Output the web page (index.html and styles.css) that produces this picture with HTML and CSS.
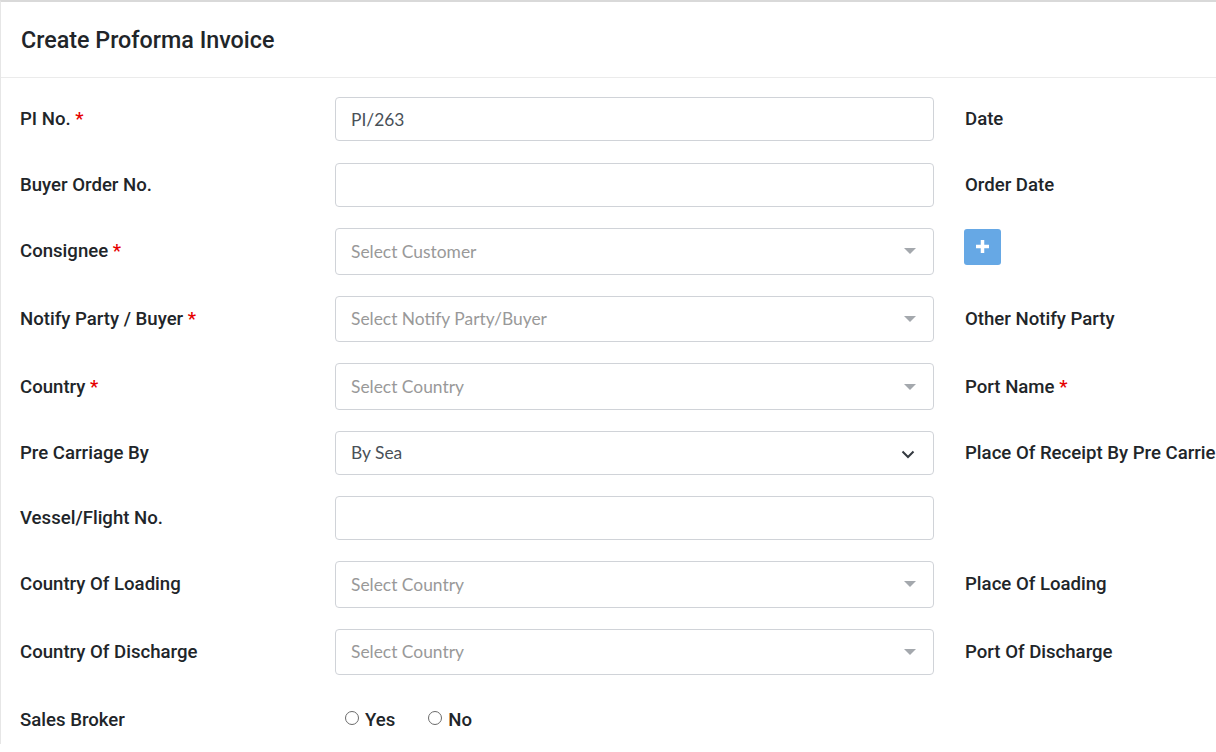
FILE: index.html
```html
<!DOCTYPE html>
<html>
<head>
<meta charset="utf-8">
<link rel="stylesheet" href="styles.css">
</head>
<body>
<div class="card">
  <div class="card-header"><h1 class="title">Create Proforma Invoice</h1></div>
  <div class="card-body">
    <div class="row first">
      <label class="lbl">PI No. <span class="req">*</span></label>
      <div class="control"><div class="input"><span class="val">PI/263</span></div></div>
      <label class="lbl lbl-right">Date</label>
    </div>
    <div class="row">
      <label class="lbl">Buyer Order No.</label>
      <div class="control"><div class="input"></div></div>
      <label class="lbl lbl-right">Order Date</label>
    </div>
    <div class="row">
      <label class="lbl">Consignee <span class="req">*</span></label>
      <div class="control"><div class="select2"><span class="ph">Select Customer</span><span class="tri"></span></div></div>
      <div class="right"><button class="btn-plus"><svg width="15" height="15" viewBox="0 0 15 15"><path d="M7.5 1v13M1 7.5h13" stroke="#fff" stroke-width="3.5" fill="none"/></svg></button></div>
    </div>
    <div class="row">
      <label class="lbl">Notify Party / Buyer <span class="req">*</span></label>
      <div class="control"><div class="select2"><span class="ph">Select Notify Party/Buyer</span><span class="tri"></span></div></div>
      <label class="lbl lbl-right">Other Notify Party</label>
    </div>
    <div class="row">
      <label class="lbl">Country <span class="req">*</span></label>
      <div class="control"><div class="select2"><span class="ph">Select Country</span><span class="tri"></span></div></div>
      <label class="lbl lbl-right">Port Name <span class="req">*</span></label>
    </div>
    <div class="row">
      <label class="lbl">Pre Carriage By</label>
      <div class="control"><div class="input native"><span class="val">By Sea</span><svg class="chev" width="14" height="10" viewBox="0 0 14 10"><path d="M1.5 2.5l5.5 5.5 5.5-5.5" stroke="#343a40" stroke-width="2" fill="none"/></svg></div></div>
      <label class="lbl lbl-right">Place Of Receipt By Pre Carrier</label>
    </div>
    <div class="row">
      <label class="lbl">Vessel/Flight No.</label>
      <div class="control"><div class="input"></div></div>
      <div class="right"></div>
    </div>
    <div class="row">
      <label class="lbl">Country Of Loading</label>
      <div class="control"><div class="select2"><span class="ph">Select Country</span><span class="tri"></span></div></div>
      <label class="lbl lbl-right">Place Of Loading</label>
    </div>
    <div class="row">
      <label class="lbl">Country Of Discharge</label>
      <div class="control"><div class="select2"><span class="ph">Select Country</span><span class="tri"></span></div></div>
      <label class="lbl lbl-right">Port Of Discharge</label>
    </div>
    <div class="row radio-row">
      <label class="lbl">Sales Broker</label>
      <div class="control radios">
        <label class="radio"><span class="circle"></span>Yes</label>
        <label class="radio"><span class="circle"></span>No</label>
      </div>
      <div class="right"></div>
    </div>
  </div>
</div>
</body>
</html>
```
FILE: styles.css
```css
html, body {
  margin: 0;
  padding: 0;
  background: #fff;
  overflow: hidden;
}
body {
  width: 1216px;
  height: 752px;
  font-family: Roboto, "Liberation Sans", sans-serif;
  color: #212529;
}
.card {
  border-top: 2px solid #d9d9d9;
  border-left: 1px solid #e6e6e6;
  width: 1400px;
  background: #fff;
}
.card-header {
  height: 75px;
  border-bottom: 1px solid #ebebeb;
  display: flex;
  align-items: center;
  padding-left: 20px;
}
.title {
  margin: 0;
  font-size: 23.3px;
  font-weight: 500;
  color: #212529;
}
.card-body {
  padding: 19px 0 0 19px;
}
.row {
  display: grid;
  grid-template-columns: 315px 599px 400px;
  column-gap: 0;
  align-items: center;
  margin-bottom: 21.1px;
}
.row.first {
  margin-bottom: 22px;
}
.lbl {
  font-size: 18.6px;
  font-weight: 500;
  white-space: nowrap;
}
.lbl-right, .right {
  padding-left: 31px;
}
.right {
  padding-left: 30px;
}
.req {
  color: #e60000;
}
.input, .select2 {
  box-sizing: border-box;
  border: 1px solid #d0d3d8;
  border-radius: 4px;
  height: 44px;
  display: flex;
  align-items: center;
  padding: 0 15px;
  font-family: "Source Sans Pro", Lato, sans-serif;
  font-size: 17.4px;
  position: relative;
}
.select2 {
  height: 46.5px;
}
.val {
  color: #495057;
}
.ph {
  color: #999;
}
.tri {
  position: absolute;
  right: 17px;
  top: 50%;
  margin-top: -3px;
  width: 0;
  height: 0;
  border-left: 6px solid transparent;
  border-right: 6px solid transparent;
  border-top: 6px solid #a4a8ad;
}
.chev {
  position: absolute;
  right: 18px;
  top: 17px;
}
.btn-plus {
  width: 37px;
  height: 36px;
  border: none;
  border-radius: 3px;
  background: #66a8e5;
  display: flex;
  align-items: center;
  justify-content: center;
  padding: 0;
  margin-top: -9px;
}
.radio-row {
  height: 48px;
}
.radios {
  display: flex;
  align-items: center;
  padding-left: 10px;
  gap: 33px;
}
.radio {
  display: flex;
  align-items: center;
  font-size: 18.6px;
  font-weight: 500;
  color: #212529;
}
.circle {
  box-sizing: border-box;
  width: 14px;
  height: 14px;
  border: 1px solid #6b6b6b;
  border-radius: 50%;
  margin-right: 6px;
  margin-top: -5px;
}
```
